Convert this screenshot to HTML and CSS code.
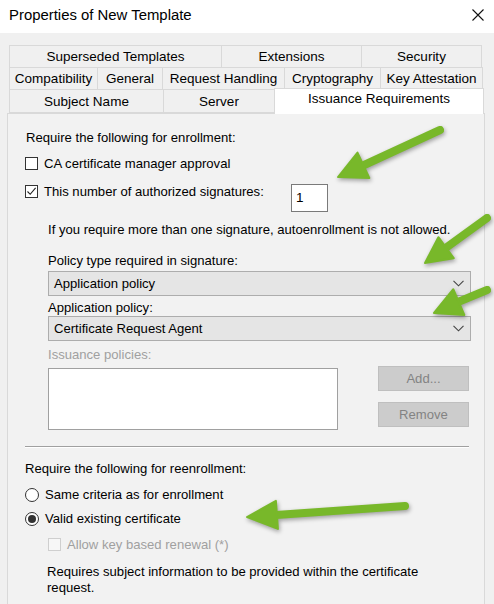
FILE: index.html
```html
<!DOCTYPE html>
<html>
<head>
<meta charset="utf-8">
<link rel="stylesheet" href="styles.css">
</head>
<body>
<div class="window">
  <div class="titlebar">
    <span class="title">Properties of New Template</span>
    <svg class="close" width="12" height="12" viewBox="0 0 12 12"><path d="M0.5 0.5 L11.5 11.5 M11.5 0.5 L0.5 11.5" stroke="#111" stroke-width="1.1" fill="none"/></svg>
  </div>
  <div class="tabs">
    <div class="tabrow row1">
      <div class="tab t-sup">Superseded Templates</div>
      <div class="tab t-ext">Extensions</div>
      <div class="tab t-sec">Security</div>
    </div>
    <div class="tabrow row2">
      <div class="tab t-com">Compatibility</div>
      <div class="tab t-gen">General</div>
      <div class="tab t-req">Request Handling</div>
      <div class="tab t-cry">Cryptography</div>
      <div class="tab t-key">Key Attestation</div>
    </div>
    <div class="tabrow row3">
      <div class="tab t-sub">Subject Name</div>
      <div class="tab t-ser">Server</div>
      <div class="tab t-iss selected">Issuance Requirements</div>
    </div>
  </div>
  <div class="panel">
    <div class="heading">Require the following for enrollment:</div>
    <div class="check-row first">
      <span class="box"></span>
      <span class="label">CA certificate manager approval</span>
    </div>
    <div class="check-row second">
      <span class="box checked"><svg width="11" height="11" viewBox="0 0 11 11"><path d="M1.5 5.5 L4.2 8.3 L9.6 1.8" stroke="#222" stroke-width="1.1" fill="none"/></svg></span>
      <span class="label sig">This number of authorized signatures:</span>
      <div class="numbox">1</div>
    </div>
    <div class="note">If you require more than one signature, autoenrollment is not allowed.</div>
    <div class="indent">
      <div class="field-label lbl1">Policy type required in signature:</div>
      <div class="combo">
        <span>Application policy</span>
        <svg width="11" height="7" viewBox="0 0 11 7"><path d="M0.5 0.8 L5.5 5.8 L10.5 0.8" stroke="#444" stroke-width="1.1" fill="none"/></svg>
      </div>
      <div class="field-label lbl2">Application policy:</div>
      <div class="combo">
        <span>Certificate Request Agent</span>
        <svg width="11" height="7" viewBox="0 0 11 7"><path d="M0.5 0.8 L5.5 5.8 L10.5 0.8" stroke="#444" stroke-width="1.1" fill="none"/></svg>
      </div>
      <div class="field-label disabled lbl3">Issuance policies:</div>
      <div class="list-row">
        <div class="listbox"></div>
        <div class="buttons">
          <div class="btn">Add...</div>
          <div class="btn">Remove</div>
        </div>
      </div>
    </div>
    <div class="separator"></div>
    <div class="heading re">Require the following for reenrollment:</div>
    <div class="radio-row r1">
      <span class="radio"></span>
      <span class="label">Same criteria as for enrollment</span>
    </div>
    <div class="radio-row r2">
      <span class="radio on"></span>
      <span class="label">Valid existing certificate</span>
    </div>
    <div class="check-row dis-row">
      <span class="box dis"></span>
      <span class="label disabled">Allow key based renewal (*)</span>
    </div>
    <div class="subnote">Requires subject information to be provided within the certificate<br>request.</div>
  </div>
  <svg class="arrows" width="494" height="604" viewBox="0 0 494 604">
    <g class="arrow">
      <line x1="440" y1="130" x2="362" y2="166" />
      <polygon points="338,177 357.5,152.6 369.3,178" />
    </g>
    <g class="arrow">
      <line x1="487" y1="218" x2="447" y2="247" />
      <polygon points="425,263 438.4,237.2 453.7,258.2" />
    </g>
    <g class="arrow">
      <line x1="487" y1="290" x2="458" y2="302" />
      <polygon points="434,313 453.3,289.2 464.3,315" />
    </g>
    <g class="arrow">
      <line x1="405" y1="506" x2="276" y2="515" />
      <polygon points="247,517 275.9,500.9 277.9,528.9" />
    </g>
  </svg>
</div>
</body>
</html>
```
FILE: styles.css
```css
html, body {
  margin: 0;
  padding: 0;
}
body {
  width: 494px;
  height: 604px;
  overflow: hidden;
  background: #f0f0f0;
  font-family: "Liberation Sans", Arial, sans-serif;
  font-size: 13.1px;
  color: #000;
}
.window {
  position: relative;
  width: 494px;
  height: 604px;
  overflow: hidden;
}
.titlebar {
  height: 33px;
  background: #fff;
  display: flex;
  align-items: center;
  justify-content: space-between;
  padding: 0 10px 0 9px;
  box-sizing: border-box;
}
.title {
  font-size: 14.9px;
  color: #000;
  margin-top: -3px;
}
.close {
  margin-top: -4px;
}
.tabs {
  margin: 12px 0 0 9px;
  width: 475px;
}
.tabrow {
  display: flex;
  align-items: flex-end;
}
.row1 { height: 23px; }
.tab {
  box-sizing: border-box;
  border: 1px solid #d9d9d9;
  margin-left: -1px;
  height: 100%;
  display: flex;
  align-items: center;
  justify-content: center;
  background: #f0f0f0;
  white-space: nowrap;
  font-size: 13.5px;
}
.tabrow .tab:first-child { margin-left: 0; }
.row2, .row3 { margin-top: -1px; }
.row2 { height: 23px; }
.row3 { height: 24px; }
.t-sup { width: 213px; }
.t-ext { width: 141px; }
.t-sec { width: 121px; }
.t-com { width: 89px; }
.t-gen { width: 66px; }
.t-req { width: 123px; }
.t-cry { width: 97px; }
.t-key { width: 103px; }
.t-sub { width: 155px; }
.t-ser { width: 112px; }
.t-iss {
  width: 210px;
}
.tab.selected {
  background: #fff;
  height: 26px;
  border-bottom: none;
  position: relative;
  z-index: 2;
  margin-bottom: -1px;
  align-items: flex-start;
  padding-top: 2px;
}
.panel {
  margin-left: 7px;
  width: 478px;
  height: 600px;
  box-sizing: border-box;
  border: 1px solid #d9d9d9;
  background: #f2f2f2;
  padding: 15px 0 0 17px;
}
.heading {
  line-height: 18px;
  height: 18px;
  padding-left: 1px;
}
.check-row, .radio-row {
  display: flex;
  align-items: flex-start;
  line-height: 18px;
}
.check-row.first { margin-top: 8px; }
.check-row.second { margin-top: 10px; height: 29px; }
.box {
  width: 13px;
  height: 13px;
  box-sizing: border-box;
  border: 1px solid #333;
  background: #fff;
  margin-top: 2px;
  display: flex;
  align-items: center;
  justify-content: center;
  flex: none;
}
.box.checked svg { display: block; }
.box.dis {
  border-color: #cfcfcf;
  background: #f7f7f7;
}
.label {
  margin-left: 6px;
  white-space: nowrap;
}
.label.sig {
  width: 247px;
  flex: none;
}
.numbox {
  margin-top: 1px;
  width: 37px;
  height: 28px;
  box-sizing: border-box;
  border: 1px solid #7a7a7a;
  background: #fff;
  padding-left: 4px;
  line-height: 26px;
  font-size: 13.5px;
}
.note {
  margin-top: 9px;
  margin-left: 23px;
  line-height: 18px;
}
.indent {
  margin-left: 23px;
}
.field-label {
  line-height: 16px;
}
.lbl1 { margin-top: 14px; }
.lbl2 { margin-top: 4px; }
.lbl3 { margin-top: 6px; }
.disabled { color: #a0a0a0; }
.combo {
  width: 423px;
  height: 25px;
  box-sizing: border-box;
  border: 1px solid #adadad;
  background: #e5e5e5;
  display: flex;
  align-items: center;
  justify-content: space-between;
  padding: 0 6px 0 5px;
}
.lbl1 + .combo { margin-top: 2px; }
.list-row {
  display: flex;
  align-items: flex-start;
  margin-top: 3px;
}
.listbox {
  width: 290px;
  height: 62px;
  margin-top: 2px;
  box-sizing: border-box;
  border: 1px solid #a0a0a0;
  background: #fff;
}
.buttons {
  margin-left: 40px;
  display: flex;
  flex-direction: column;
  gap: 11px;
}
.btn {
  width: 91px;
  height: 25px;
  box-sizing: border-box;
  border: 1px solid #bfbfbf;
  background: #cccccc;
  color: #838383;
  display: flex;
  align-items: center;
  justify-content: center;
}
.separator {
  margin-top: 16px;
  width: 444px;
  height: 1px;
  background: #a0a0a0;
  border-bottom: 1px solid #fff;
}
.heading.re {
  margin-top: 12px;
  padding-left: 0;
}
.radio-row.r1 { margin-top: 8px; }
.radio-row.r2 { margin-top: 6px; }
.radio {
  width: 14px;
  height: 14px;
  box-sizing: border-box;
  border: 1px solid #333;
  border-radius: 50%;
  background: #fff;
  margin-top: 2px;
  display: flex;
  align-items: center;
  justify-content: center;
  flex: none;
}
.radio.on::after {
  content: "";
  width: 8px;
  height: 8px;
  border-radius: 50%;
  background: #333;
}
.radio + .label { margin-left: 6px; }
.check-row.dis-row {
  margin-top: 8px;
  margin-left: 23px;
}
.subnote {
  margin-top: 10px;
  margin-left: 22px;
  line-height: 16px;
}
.arrows {
  position: absolute;
  left: 0;
  top: 0;
  pointer-events: none;
}
.arrow {
  filter: drop-shadow(1px 2px 2px rgba(0, 0, 0, 0.35));
}
.arrow line {
  stroke: #78b82a;
  stroke-width: 8;
  stroke-linecap: round;
}
.arrow polygon {
  fill: #78b82a;
  stroke: #78b82a;
  stroke-width: 2;
  stroke-linejoin: round;
}
```
